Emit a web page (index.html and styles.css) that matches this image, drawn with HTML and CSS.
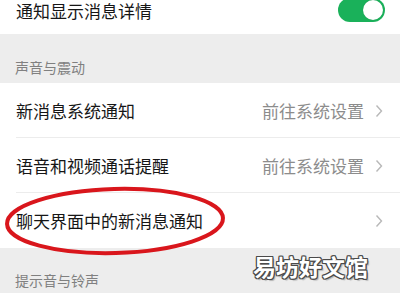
FILE: index.html
```html
<!DOCTYPE html>
<html lang="zh">
<head>
<meta charset="utf-8">
<link rel="stylesheet" href="styles.css">
</head>
<body>
<div class="screen">
  <div class="row row--top">
    <span class="row-title">通知显示消息详情</span>
    <span class="switch"><span class="knob"></span></span>
  </div>
  <div class="section-header"><span>声音与震动</span></div>
  <div class="group">
    <div class="row">
      <span class="row-title">新消息系统通知</span>
      <span class="row-extra">前往系统设置<svg class="chev" width="8" height="14" viewBox="0 0 8 14"><polyline points="1.5,1.5 6.5,7 1.5,12.5" fill="none" stroke="#b8b8b8" stroke-width="1.4"/></svg></span>
    </div>
    <div class="row">
      <span class="row-title">语音和视频通话提醒</span>
      <span class="row-extra">前往系统设置<svg class="chev" width="8" height="14" viewBox="0 0 8 14"><polyline points="1.5,1.5 6.5,7 1.5,12.5" fill="none" stroke="#b8b8b8" stroke-width="1.4"/></svg></span>
    </div>
    <div class="row row--last">
      <span class="row-title">聊天界面中的新消息通知</span>
      <span class="row-extra"><svg class="chev" width="8" height="14" viewBox="0 0 8 14"><polyline points="1.5,1.5 6.5,7 1.5,12.5" fill="none" stroke="#b8b8b8" stroke-width="1.4"/></svg></span>
    </div>
  </div>
  <div class="section-header section-header--short"><span>提示音与铃声</span></div>

  <svg class="circle-mark" width="230" height="76" viewBox="0 0 230 76">
    <ellipse cx="114" cy="36" rx="108" ry="32" fill="none" stroke="#d9161c" stroke-width="4" transform="rotate(-1.5 114 36)"/>
  </svg>
  <div class="watermark">易坊好文馆</div>
</div>
</body>
</html>
```

FILE: styles.css
```css
* { box-sizing: border-box; }
html, body {
  margin: 0;
  padding: 0;
  background: #ffffff;
}
.screen {
  position: relative;
  width: 400px;
  height: 300px;
  overflow: hidden;
  font-family: "Noto Sans CJK SC", "Noto Sans", sans-serif;
  background: #ffffff;
}
.row {
  display: flex;
  align-items: center;
  justify-content: space-between;
  height: 55px;
  padding: 0 17px 0 16px;
  background: #fff;
  position: relative;
}
.row::after {
  content: "";
  position: absolute;
  left: 16px;
  right: 0;
  bottom: 0;
  height: 1px;
  background: #ececec;
}
.row--last::after { display: none; }
.row--top {
  height: 34px;
  align-items: flex-start;
  padding-top: 0;
}
.row--top::after { display: none; }
.row--top .row-title { line-height: 20px; padding-top: 1px; }
.row-title {
  font-size: 17px;
  color: #161616;
  line-height: 22px;
}
.row-extra {
  display: flex;
  align-items: center;
  font-size: 17px;
  color: #8c8c8c;
  line-height: 22px;
}
.chev {
  margin-left: 11px;
  display: block;
}
.switch {
  margin-top: -2px;
  width: 47px;
  height: 24px;
  border-radius: 12px;
  background: #1ab15a;
  display: flex;
  align-items: center;
  justify-content: flex-end;
  padding-right: 2px;
  margin-right: -2px;
}
.knob {
  width: 20px;
  height: 20px;
  border-radius: 50%;
  background: #fff;
  box-shadow: 0 0 1px rgba(0,0,0,0.2);
}
.section-header {
  height: 49px;
  background: #ededed;
  padding: 25px 15px 0;
  font-size: 14px;
  line-height: 16px;
  color: #808080;
}
.section-header--short {
  height: 45px;
  padding-top: 24px;
}
.circle-mark {
  position: absolute;
  left: 1px;
  top: 185px;
}
.watermark {
  position: absolute;
  left: 253px;
  top: 251px;
  font-size: 23px;
  line-height: 30px;
  color: #ffffff;
  font-weight: 700;
  text-shadow:
    1px 0 0 #4a4a4a, -1px 0 0 #4a4a4a, 0 1px 0 #4a4a4a, 0 -1px 0 #4a4a4a,
    1px 1px 0 #4a4a4a, -1px -1px 0 #4a4a4a, 1px -1px 0 #4a4a4a, -1px 1px 0 #4a4a4a,
    2px 2px 1px rgba(0,0,0,0.25);
}
```
